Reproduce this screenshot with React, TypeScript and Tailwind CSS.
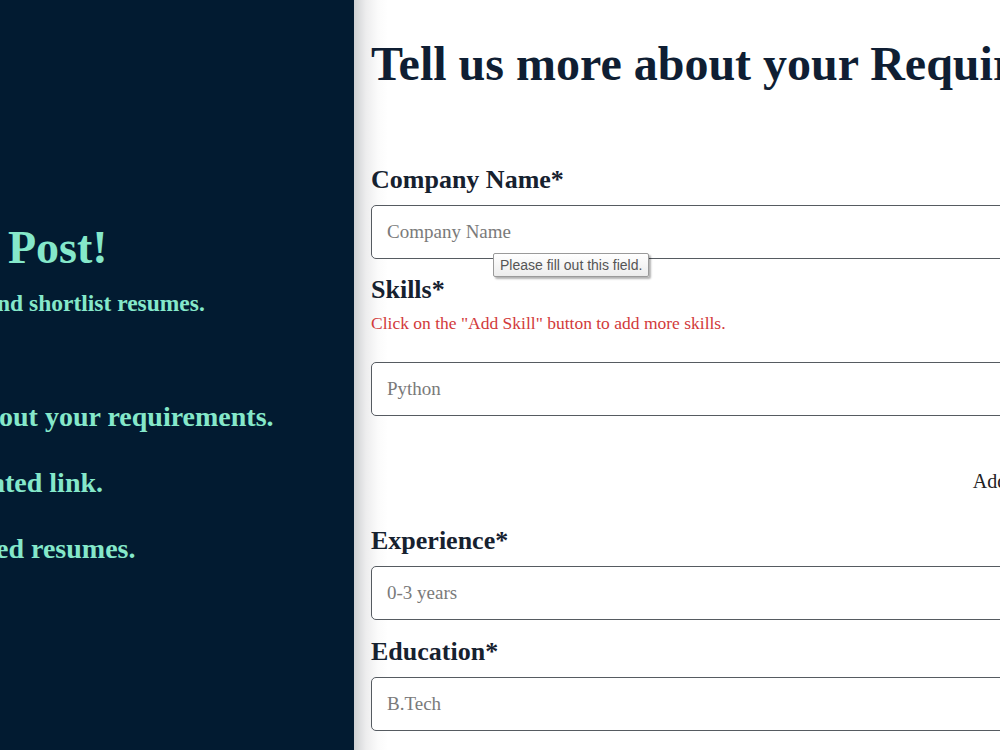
const serif = "font-['Liberation_Serif','Times_New_Roman',serif]";

function Field({ label, placeholder, children }: { label: string; placeholder: string; children?: React.ReactNode }) {
    return (
        <div>
            <label className="block text-[26px] leading-none font-bold text-[#16212f]">{label}</label>
            {children}
            <input
                placeholder={placeholder}
                className="mt-3 h-[54px] w-[760px] rounded-[5px] border-[1.5px] border-[#565b61] bg-white px-[15px] text-[19px] text-[#333] placeholder:text-[#7a7a7a] outline-none"
            />
        </div>
    );
}

export default function App() {
    return (
        <div className={`flex h-[750px] w-[1000px] overflow-hidden ${serif}`}>
            {/* Left info panel, clipped on its left side */}
            <aside className="w-[354px] shrink-0 overflow-hidden bg-[#021b31] text-[#85e8ca] font-bold whitespace-nowrap">
                <h2 className="mt-[225px] ml-2 text-[46px] leading-none">Post!</h2>
                <p className="mt-[21px] -ml-[3px] text-[23.5px] leading-none">nd shortlist resumes.</p>
                <p className="mt-[87px] -ml-[1px] text-[28px] leading-none">out your requirements.</p>
                <p className="mt-[38px] -ml-[9px] text-[28px] leading-none">ated link.</p>
                <p className="mt-[38px] -ml-[4px] text-[28px] leading-none">ed resumes.</p>
            </aside>

            {/* Form panel */}
            <main className="flex-1 overflow-hidden bg-[linear-gradient(to_right,#cfd1d3_0px,#ededee_12px,#fbfbfb_24px,#ffffff_34px)] pl-[17px] pt-[40px]">
                <h1 className="text-[48px] leading-none font-bold text-[#0f1e33] whitespace-nowrap">Tell us more about your Requirements</h1>

                <div className="relative mt-[79px]">
                    <Field label="Company Name*" placeholder="Company Name" />
                    <div className="absolute left-[122px] top-[86px] z-10 flex h-[24px] items-center rounded-[2px] border border-[#9a9a9a] bg-[linear-gradient(to_bottom,#ffffff,#ececec)] px-[6px] font-['Liberation_Sans',Arial,sans-serif] text-[14px] text-[#555] shadow-[2px_2px_2px_rgba(0,0,0,0.3)]">
                        Please fill out this field.
                    </div>
                </div>

                <div className="mt-[18px]">
                    <Field label="Skills*" placeholder="Python">
                        <p className="mt-[12px] mb-[17px] text-[17.5px] leading-none text-[#d23a3a]">Click on the "Add Skill" button to add more skills.</p>
                    </Field>
                </div>

                <div className="flex w-[760px] justify-end pt-[55px]">
                    <button className="mr-[81px] text-[20px] leading-none text-[#222]">Add Skill</button>
                </div>

                <div className="mt-[37px]">
                    <Field label="Experience*" placeholder="0-3 years" />
                </div>
                <div className="mt-[19px]">
                    <Field label="Education*" placeholder="B.Tech" />
                </div>
            </main>
        </div>
    );
}
